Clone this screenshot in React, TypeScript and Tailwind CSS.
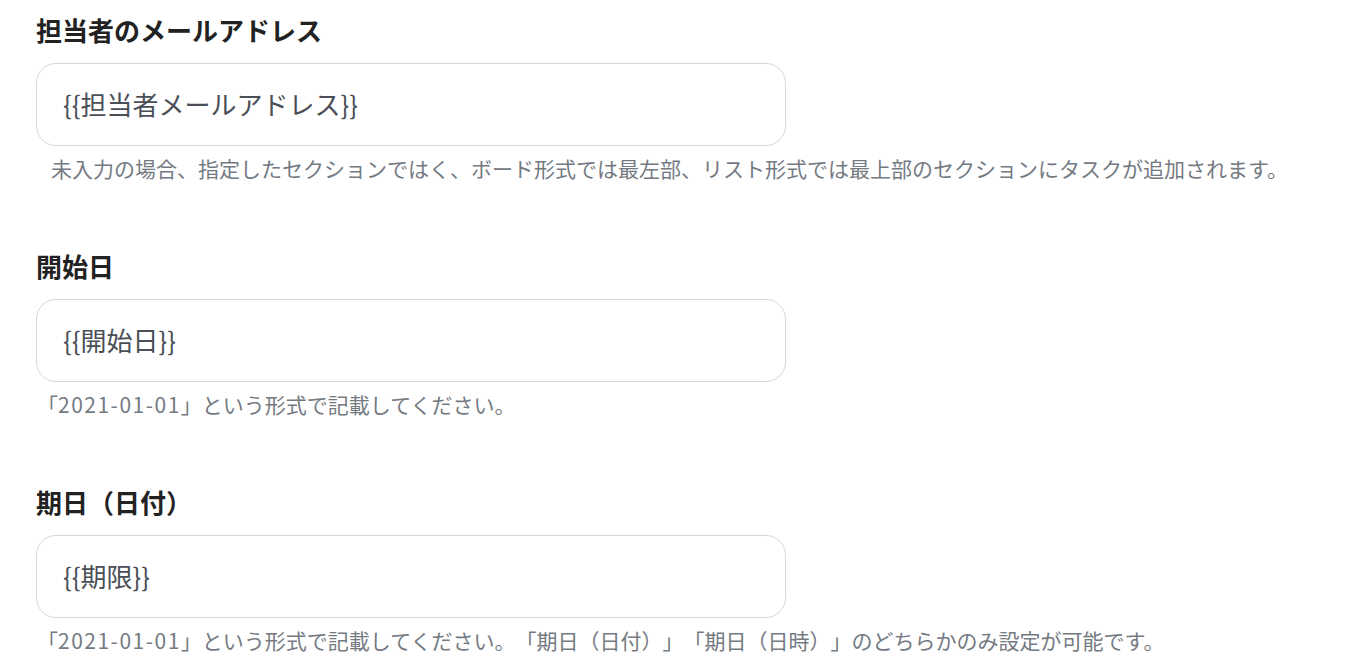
import React from 'react';

const FONT = "font-['Noto_Sans_CJK_JP','Noto_Sans',sans-serif]";

type Field = {
  label: string;
  value: string;
  note: React.ReactNode;
  noteIndent?: boolean;
};

// digits in the reference are a touch wider than Noto's
const Date = () => <span className="tracking-[1.5px]">2021-01-01</span>;

const fields: Field[] = [
  {
    label: '担当者のメールアドレス',
    value: '{{担当者メールアドレス}}',
    note: '未入力の場合、指定したセクションではく、ボード形式では最左部、リスト形式では最上部のセクションにタスクが追加されます。',
    noteIndent: true,
  },
  {
    label: '開始日',
    value: '{{開始日}}',
    note: (
      <>
        「<Date />」という形式で記載してください。
      </>
    ),
  },
  {
    label: '期日（日付）',
    value: '{{期限}}',
    note: (
      <>
        「<Date />」という形式で記載してください。「期日（日付）」「期日（日時）」のどちらかのみ設定が可能です。
      </>
    ),
  },
];

function FormField({ field }: { field: Field }) {
  return (
    <div className="flex flex-col">
      {/* Label */}
      <label className="text-[26px] font-bold leading-[36px] text-[#222222]">
        {field.label}
      </label>

      {/* Input */}
      <input
        type="text"
        readOnly
        defaultValue={field.value}
        className="mt-[15px] h-[83px] w-[750px] rounded-[20px] border border-[#d4d7dc] bg-white px-[26px] pb-[3px] text-[26px] text-[#4a4f57] outline-none"
      />

      {/* Note */}
      <p
        className={`mt-[7px] text-[21px] leading-[30px] text-[#747a82] [text-spacing-trim:space-all] ${
          field.noteIndent ? 'pl-[15px]' : 'pl-[1px]'
        }`}
      >
        {field.note}
      </p>
    </div>
  );
}

export default function App() {
  return (
    <main className={`min-h-screen bg-white pt-[12px] pl-[36px] ${FONT}`}>
      <div className="flex flex-col gap-[65px]">
        {fields.map((f) => (
          <FormField key={f.label} field={f} />
        ))}
      </div>
    </main>
  );
}
